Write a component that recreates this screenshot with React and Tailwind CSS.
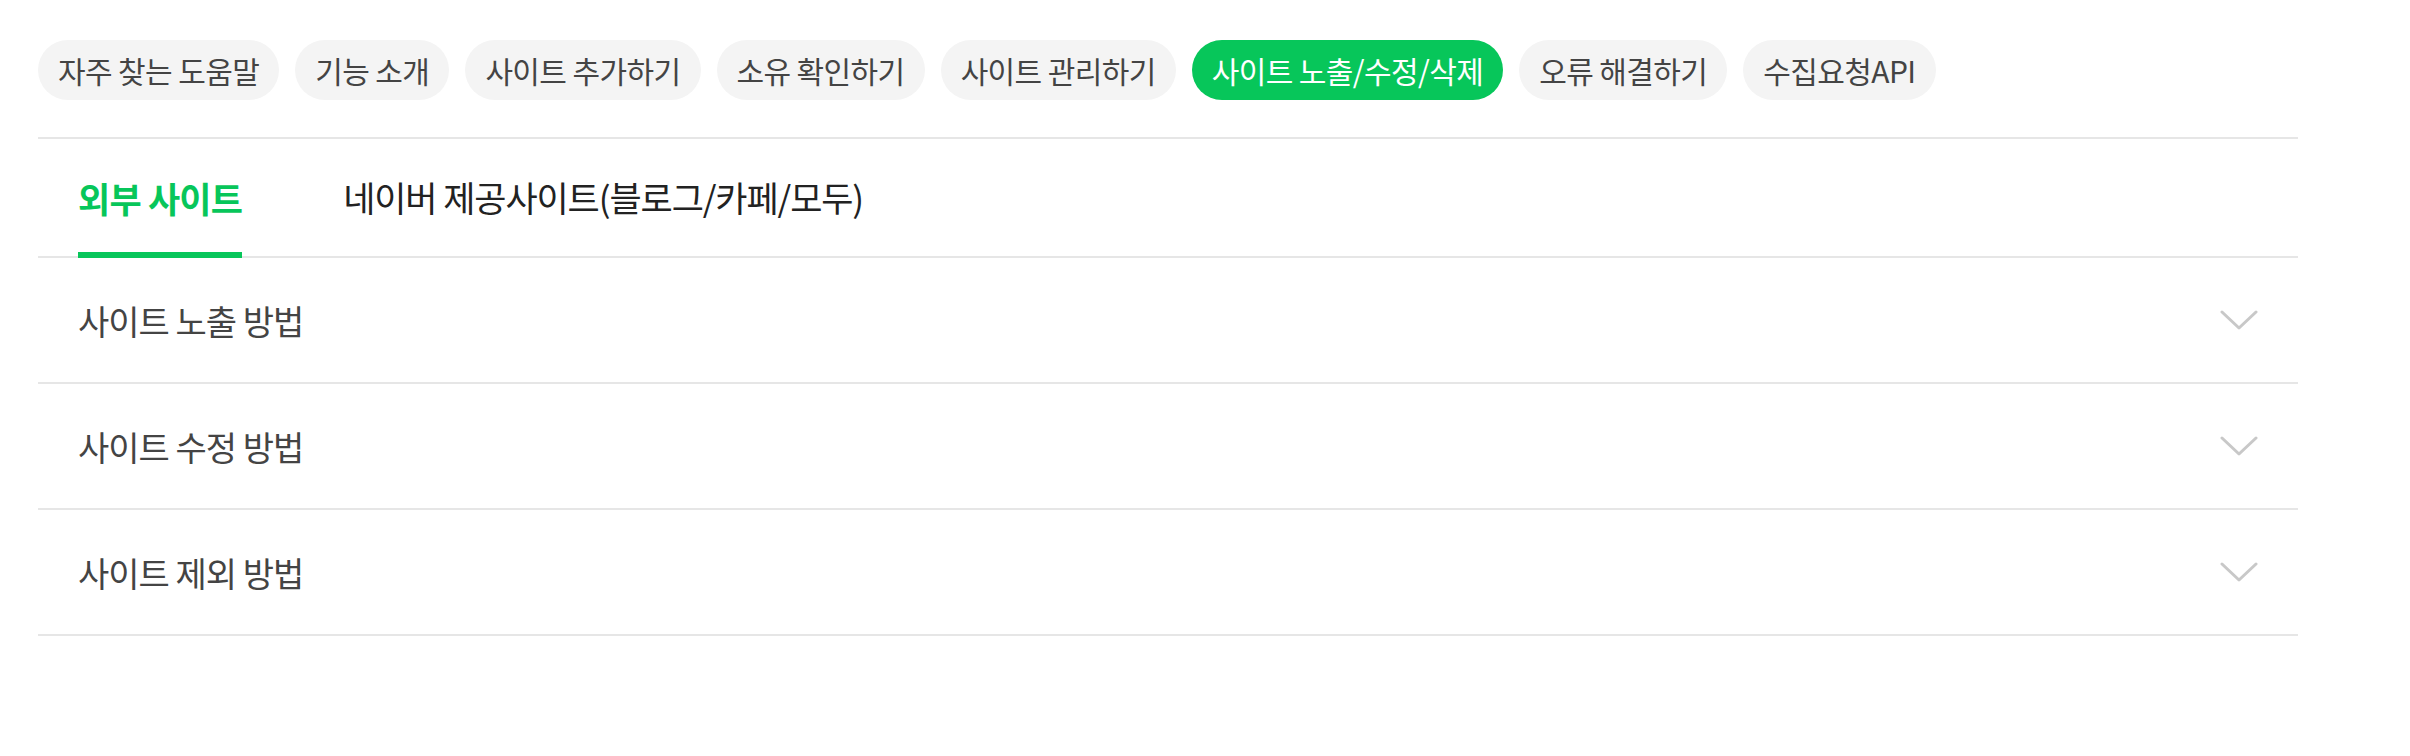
import React from "react";

const pills = [
  "자주 찾는 도움말",
  "기능 소개",
  "사이트 추가하기",
  "소유 확인하기",
  "사이트 관리하기",
  "사이트 노출/수정/삭제",
  "오류 해결하기",
  "수집요청API",
];

const rows = ["사이트 노출 방법", "사이트 수정 방법", "사이트 제외 방법"];

function Chevron() {
  return (
    <svg width="38" height="22" viewBox="0 0 38 22" fill="none">
      <path d="M2 3 L19 19 L36 3" stroke="#c8c8c8" strokeWidth="3" strokeLinecap="round" strokeLinejoin="round" />
    </svg>
  );
}

export default function App() {
  return (
    <div
      className="min-h-[756px] bg-white pl-[38px] pt-[40px]"
      style={{ fontFamily: '"Noto Sans CJK KR", "Noto Sans", sans-serif' }}
    >
      <div className="w-[2260px]">
        <div className="flex gap-[16px]">
          {pills.map((p, i) => (
            <div
              key={p}
              className={
                i === 5
                  ? "flex h-[60px] items-center rounded-full bg-[#07c65a] px-[20px] text-[30px] tracking-[-0.6px] text-white"
                  : "flex h-[60px] items-center rounded-full bg-[#f4f4f4] px-[20px] text-[30px] tracking-[-0.6px] text-[#444444]"
              }
            >
              {p}
            </div>
          ))}
        </div>

        <div className="mt-[37px] flex gap-[101px] border-y-2 border-[#e6e6e6] pl-[40px]">
          <div className="-mb-[2px] flex h-[119px] items-center border-b-[6px] border-[#07c65a] pt-[6px] text-[35px] font-bold tracking-[-0.8px] text-[#07c65a]">
            외부 사이트
          </div>
          <div className="flex h-[117px] items-center text-[35px] tracking-[-1.1px] text-[#222222]">
            네이버 제공사이트(블로그/카페/모두)
          </div>
        </div>

        {rows.map((r) => (
          <div
            key={r}
            className="flex h-[126px] items-center justify-between border-b-2 border-[#e6e6e6] pl-[40px] pr-[40px]"
          >
            <span className="text-[34px] tracking-[-1px] text-[#444444]">{r}</span>
            <Chevron />
          </div>
        ))}
      </div>
    </div>
  );
}
